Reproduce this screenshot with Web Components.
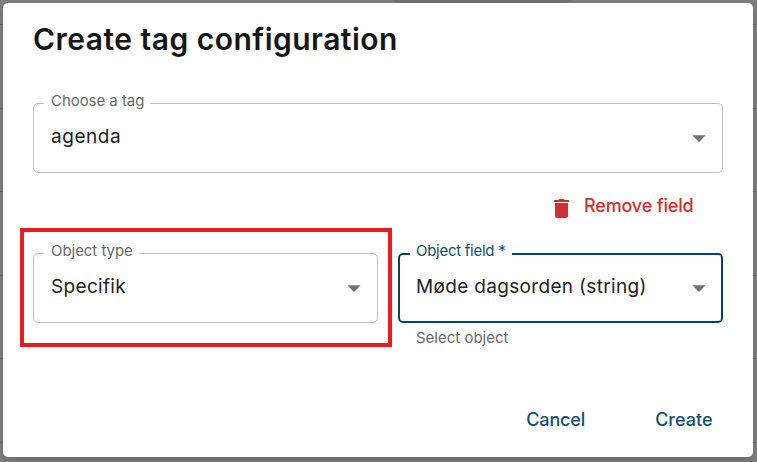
<!DOCTYPE html>
<html lang="en">
<head>
<meta charset="utf-8">
<title>Create tag configuration</title>
<style>
html,body{margin:0;height:100%;overflow:hidden}
body{font-family:Inter,"Liberation Sans",sans-serif;color:#222;background:#7c7b7b}
</style>
</head>
<body>
<tag-page></tag-page>
<script>
const define = (name, html) => {
  const t = document.createElement('template');
  t.innerHTML = html;
  customElements.define(name, class extends HTMLElement {
    constructor() {
      super();
      this.attachShadow({mode: 'open'}).append(t.content.cloneNode(true));
    }
  });
};

define('select-field', `
<style>
:host{display:block;position:relative;box-sizing:border-box;height:70px;border:1px solid #c1c1c1;border-radius:5px;padding:0 14px 0 17px;color:#222}
:host([focused]){border:2px solid #00446a;padding:0 13px 0 16px}
.label{position:absolute;left:10px;top:-13px;padding:0 6px 0 7px;background:#fff;color:#696969;font-size:15px;line-height:20px;white-space:nowrap;letter-spacing:-.05px}
:host([focused]) .label{left:10px;top:-14px;padding:0 7px 0 6px;color:#124f73;letter-spacing:-.27px}
.row{display:flex;align-items:center;justify-content:space-between;height:100%}
.value{font-size:19px;line-height:24px;padding-bottom:3px;letter-spacing:var(--value-space,.33px);white-space:nowrap}
svg{display:block;width:18px;height:9px}
</style>
<div class="label"><slot name="label"></slot></div>
<div class="row"><div class="value"><slot></slot></div>
<svg viewBox="0 0 18 9"><path d="M2.3 1.3H15.7L9 8Z" fill="#737373"/></svg></div>`);

define('field-helper', `
<style>:host{display:block;padding:5px 0 0 18px;font-size:15px;line-height:20px;color:#696969}</style><slot></slot>`);

define('remove-button', `
<style>
:host{display:flex;align-items:center;color:#d32f2f;font-size:18px;line-height:24px;font-weight:500;letter-spacing:-.17px;white-space:nowrap}
svg{display:block;width:15px;height:19px;margin:5px 15px 0 0}
</style>
<svg viewBox="0 0 15 19"><path d="M0 1H4.2L5.3 0H9.7L10.8 1H15V3H0ZM1 4H14V16.8Q14 19 11.8 19H3.2Q1 19 1 16.8Z" fill="#d32f2f"/></svg>
<slot></slot>`);

define('text-button', `
<style>:host{display:block;color:#124f73;font-size:18px;line-height:24px;font-weight:500;letter-spacing:var(--space,0);white-space:nowrap}</style><slot></slot>`);

define('highlight-frame', `
<style>:host{display:block;position:absolute;left:-13px;top:-25px;width:372px;height:119px;box-sizing:border-box;border:4px solid #e81c1f;pointer-events:none}</style>`);

define('tag-dialog', `
<style>
:host{display:block;position:relative;box-sizing:border-box;width:750px;height:454px;background:#fff;border-radius:5px;padding:18px 30px 0;box-shadow:0 4px 10px rgba(0,0,0,.14)}
h1{margin:0;color:#161616;font-size:30px;line-height:36px;font-weight:600;letter-spacing:.48px;white-space:nowrap}
.first{margin-top:46px}
.remove{display:flex;justify-content:flex-end;align-items:flex-start;box-sizing:border-box;height:80px;padding:21px 29.5px 0 0}
.fields{position:relative;display:grid;grid-template-columns:345px 325px;gap:20px}
.actions{display:flex;justify-content:flex-end;gap:70px;padding:60px 10.5px 0 0}
</style>
<h1><slot name="title"></slot></h1>
<div class="first"><slot name="tag"></slot></div>
<div class="remove"><slot name="remove"></slot></div>
<div class="fields"><slot name="type"></slot><div><slot name="field"></slot></div><highlight-frame></highlight-frame></div>
<div class="actions"><slot name="actions"></slot></div>`);

define('tag-page', `
<style>
:host{display:block;position:relative;box-sizing:border-box;height:462px;padding:3px 0 0 3px;overflow:hidden;
background:linear-gradient(#6c6c6c,#6c6c6c) 0 24px/100% 1px no-repeat,linear-gradient(#6c6c6c,#6c6c6c) 0 108px/100% 1px no-repeat,linear-gradient(#6c6c6c,#6c6c6c) 0 191px/100% 1px no-repeat,linear-gradient(#6c6c6c,#6c6c6c) 0 275px/100% 1px no-repeat,linear-gradient(#6c6c6c,#6c6c6c) 0 358px/100% 1px no-repeat,linear-gradient(#6c6c6c,#6c6c6c) 0 442px/100% 1px no-repeat,#7e7e7e}
.pill{position:absolute;left:385px;top:-30px;width:195px;height:33px;border-radius:16px;background:#737272}
.agenda{--value-space:.55px}
.cancel{--space:-.15px}
</style>
<div class="pill"></div>
<tag-dialog>
<span slot="title">Create tag configuration</span>
<select-field slot="tag" class="agenda"><span slot="label">Choose a tag</span>agenda</select-field>
<remove-button slot="remove">Remove field</remove-button>
<select-field slot="type"><span slot="label">Object type</span>Specifik</select-field>
<select-field slot="field" focused><span slot="label">Object field *</span>Møde dagsorden (string)</select-field>
<field-helper slot="field">Select object</field-helper>
<text-button slot="actions" class="cancel">Cancel</text-button>
<text-button slot="actions">Create</text-button>
</tag-dialog>`);
</script>
</body>
</html>
